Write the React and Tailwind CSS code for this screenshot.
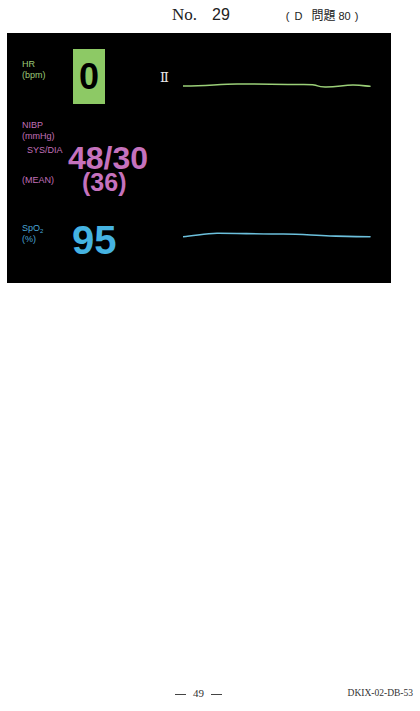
const serif = { fontFamily: '"Liberation Serif", "Times New Roman", serif' }

const Wave = ({ d, color }) => (
  <svg width="190" height="12" viewBox="0 0 190 12" className="shrink-0">
    <path d={d} fill="none" stroke={color} strokeWidth="1.6" strokeLinecap="round" />
  </svg>
)

const App = () => {
  return (
    <div className="w-[420px] h-[711px] bg-white flex flex-col font-['Liberation_Sans',Arial,sans-serif]">
      {/* page header */}
      <div className="h-[33px] flex items-baseline pt-[6px] pl-[172px] text-[#222]">
        <span className="text-[17px] leading-[17px] font-['Liberation_Serif',serif]">No.</span>
        <span className="ml-[15px] text-[16px] leading-[17px]">29</span>
        <span className="ml-[56px] text-[11px] leading-[17px] flex items-baseline">
          <span>(</span>
          <span className="ml-[5px]">D</span>
          <span className="ml-[9px] text-[12px] font-['Noto_Sans_CJK_JP',sans-serif]">問題</span>
          <span className="ml-[3px]">80</span>
          <span className="ml-[4px]">)</span>
        </span>
      </div>

      {/* monitor */}
      <div className="ml-[7px] w-[384px] h-[250px] bg-black flex flex-col pt-[16px] pl-[15px]">
        {/* HR */}
        <div className="flex h-[55px]">
          <div className="w-[51px] pt-[10px] text-[9px] leading-[11px] text-[#9ccb78]">
            <div>HR</div>
            <div>(bpm)</div>
          </div>
          <div className="w-[32px] h-[55px] bg-[#8dc965] flex items-center justify-center text-[36px] font-bold leading-none text-black">
            0
          </div>
          <div className="w-[55px]" />
          <div className="w-[23px] pt-[21px] text-[13px] leading-[15px] text-[#e8e8e8] font-['DejaVu_Serif','Liberation_Serif',serif]">
            Ⅱ
          </div>
          <div className="pt-[31px]">
            <Wave color="#9bcf78" d="M0 6 C 20 6.2, 36 4.2, 54 4 S 100 4.6, 120 4.5 S 130 6.8, 142 7 S 160 5, 170 5 S 183 6.3, 187 6.3" />
          </div>
        </div>

        {/* NIBP */}
        <div className="flex h-[80px] mt-[16px] text-[#c572bd]">
          <div className="w-[46px] text-[9px] leading-[11px] text-[#c270b8]">
            <div>NIBP</div>
            <div>(mmHg)</div>
            <div className="mt-[3px] pl-[5px]">SYS/DIA</div>
            <div className="mt-[19px]">(MEAN)</div>
          </div>
          <div className="flex flex-col font-bold">
            <div className="mt-[25px] text-[32px] leading-[26px]">48/30</div>
            <div className="mt-[1px] pl-[14px] text-[25px] leading-[20px]">(36)</div>
          </div>
        </div>

        {/* SpO2 */}
        <div className="flex">
          <div className="w-[50px] mt-[23px] text-[9px] leading-[11px] text-[#4aa6d6]">
            <div>
              SpO<sub className="text-[6px] leading-none align-baseline relative top-[2px]">2</sub>
            </div>
            <div>(%)</div>
          </div>
          <div className="w-[111px] mt-[20px] text-[40px] leading-[40px] font-bold text-[#45b3e2]">95</div>
          <div className="pt-[30px]">
            <Wave color="#6cc0dc" d="M0 6.7 C 12 6, 22 3.4, 34 3.3 S 80 4, 100 4 S 130 5.6, 147 6 S 175 6.7, 187 6.7" />
          </div>
        </div>
      </div>

      <div className="flex-1" />

      {/* page footer */}
      <div className="h-[23px] flex items-start pl-[175px] pr-[7px] text-[#333]" style={serif}>
        <div className="flex gap-[7px] text-[11px] leading-[11px]">
          <span className="inline-block w-[11px] border-t border-[#444] mt-[6px]" />
          <span>49</span>
          <span className="inline-block w-[11px] border-t border-[#444] mt-[6px]" />
        </div>
        <div className="ml-auto text-[9.5px] leading-[11px]">DKIX-02-DB-53</div>
      </div>
    </div>
  )
}

export default App
